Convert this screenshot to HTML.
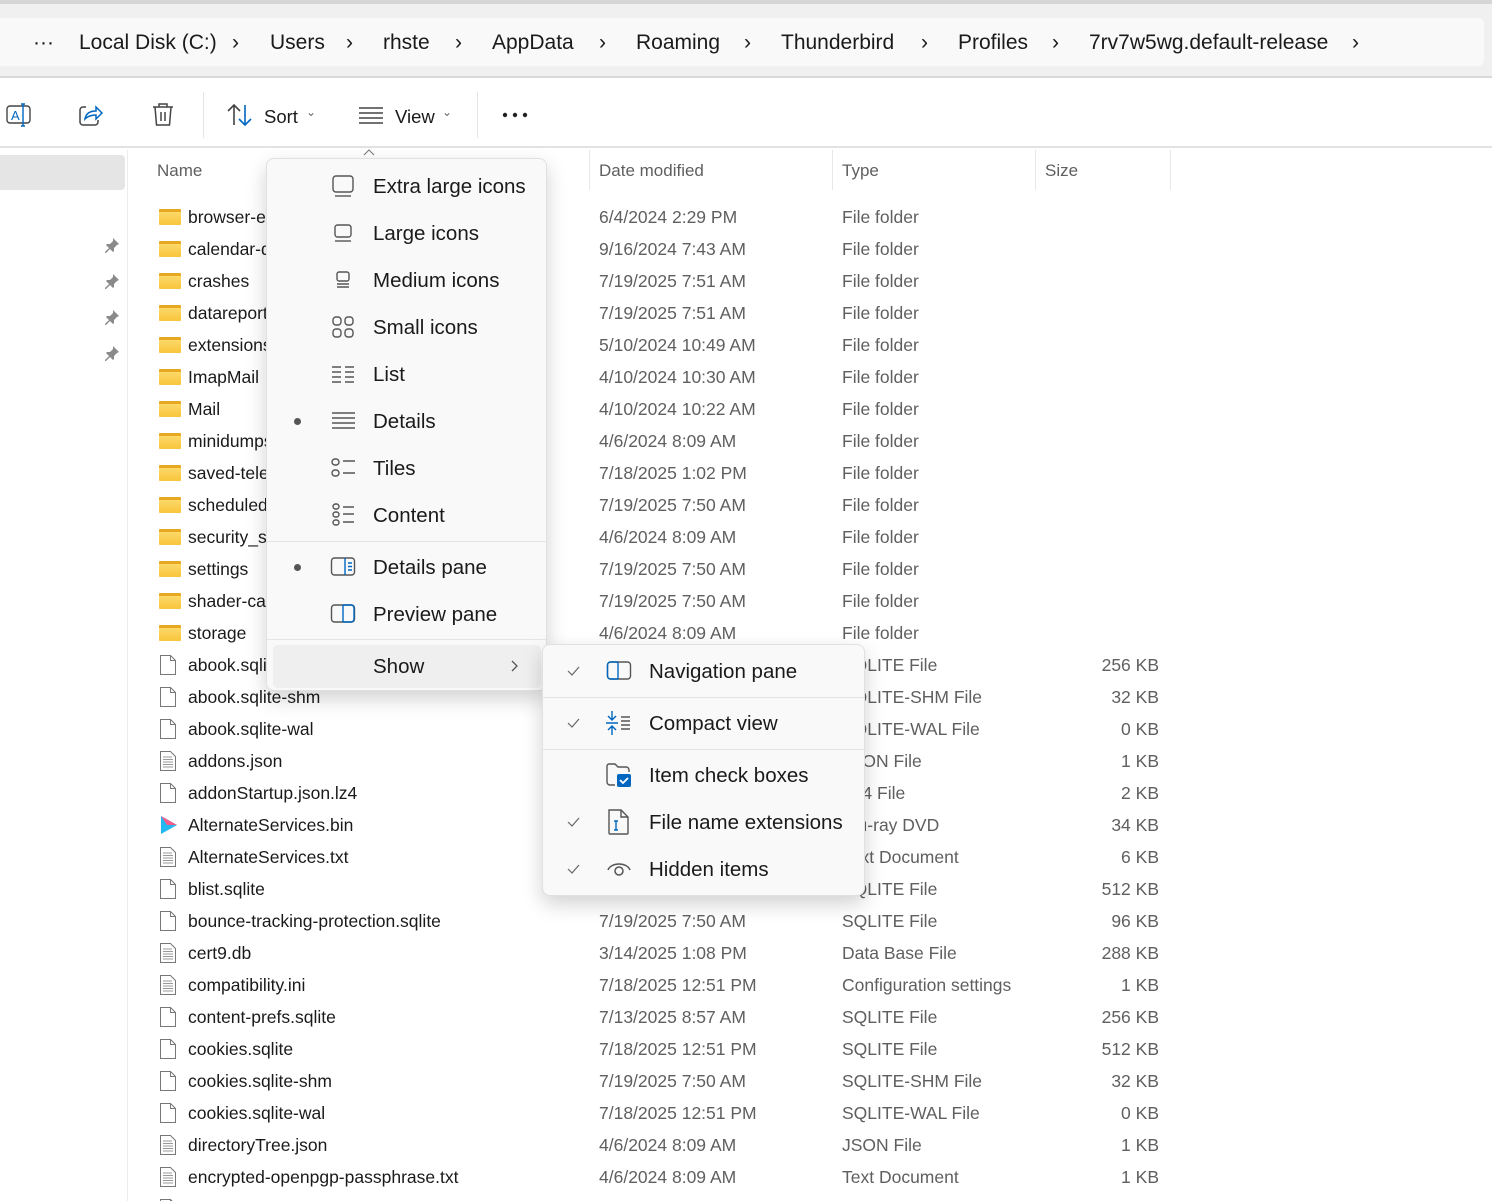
<!DOCTYPE html>
<html><head><meta charset="utf-8">
<style>
*{box-sizing:border-box;margin:0;padding:0}
html,body{width:1492px;height:1201px;overflow:hidden}
body{background:#fff;font-family:"Liberation Sans",sans-serif;position:relative;color:#1a1a1a}
.abs{position:absolute}
.top{left:0;top:0;width:1492px;height:78px;background:#f0f0f0;border-top:4px solid #d6d6d6;border-bottom:2px solid #d9d9d9}
.crumb{left:0;top:18px;width:1484px;height:48px;background:#f9f9f9;border-radius:0 6px 6px 0}
.bc{top:31px;font-size:21px;color:#1a1a1a;white-space:nowrap}
.tb{left:0;top:80px;width:1492px;height:68px;background:#fff;border-bottom:2px solid #e3e3e3}
.nav{left:0;top:150px;width:128px;height:1051px;border-right:1px solid #ececec}
.hdr{top:161px;font-size:17px;color:#5f5f5f}
.cd{top:150px;width:1px;height:40px;background:#e8e8e8}
.row{position:absolute;left:0;height:32px;width:1180px;font-size:17.5px;white-space:nowrap}
.row span{position:absolute;top:7px}
.n{left:188px}
.d{left:599px;color:#5f5f5f}
.t{left:842px;color:#5f5f5f}
.s{right:21px;color:#5f5f5f}
.ic{position:absolute;left:159px;top:6px}
.fold{width:22px;height:16px;top:9px;background:linear-gradient(#ffd96a,#f8c53a);border-radius:1px;border-top:3px solid #e8a922}
.menu{background:#f9f9f9;border:1px solid #e0e0e0;border-radius:8px;box-shadow:0 8px 20px rgba(0,0,0,.18)}
.mi{position:absolute;font-size:20.5px;color:#1a1a1a;white-space:nowrap}
.sep{position:absolute;height:1px;background:#e5e5e5}
.dot{position:absolute;width:7px;height:7px;border-radius:50%;background:#555}
.pin{left:104px}
</style></head><body>
<div class="abs top"></div>
<div class="abs crumb"></div>
<div class="abs bc" style="left:33px">···</div>
<div class="abs bc" style="left:79px">Local Disk (C:)</div>
<div class="abs bc" style="left:232px">›</div>
<div class="abs bc" style="left:270px">Users</div>
<div class="abs bc" style="left:346px">›</div>
<div class="abs bc" style="left:383px">rhste</div>
<div class="abs bc" style="left:455px">›</div>
<div class="abs bc" style="left:492px">AppData</div>
<div class="abs bc" style="left:599px">›</div>
<div class="abs bc" style="left:636px">Roaming</div>
<div class="abs bc" style="left:744px">›</div>
<div class="abs bc" style="left:781px">Thunderbird</div>
<div class="abs bc" style="left:921px">›</div>
<div class="abs bc" style="left:958px">Profiles</div>
<div class="abs bc" style="left:1052px">›</div>
<div class="abs bc" style="left:1089px">7rv7w5wg.default-release</div>
<div class="abs bc" style="left:1352px">›</div>

<div class="abs tb"></div>
<svg class="abs" style="left:6px;top:102px" width="26" height="26" viewBox="0 0 26 26" fill="none" stroke="#444" stroke-width="1.4"><rect x="1" y="4" width="23" height="17" rx="3"/><text x="5" y="18" font-size="13" fill="#0067c0" stroke="none" font-family="Liberation Sans">A</text><path d="M17 2v22M15 2h4M15 24h4" stroke="#0067c0"/></svg>
<svg class="abs" style="left:78px;top:102px" width="26" height="26" viewBox="0 0 26 26" fill="none" stroke-width="1.5"><path d="M8 5H5a3 3 0 0 0-3 3v12a3 3 0 0 0 3 3h12a3 3 0 0 0 3-3v-2" stroke="#444"/><path d="M7 17c1-6 5-8 11-8V5l6 6-6 6v-4c-4 0-8 1-11 4z" stroke="#0067c0"/></svg>
<svg class="abs" style="left:151px;top:102px" width="24" height="26" viewBox="0 0 24 26" fill="none" stroke="#444" stroke-width="1.5"><path d="M2 5h20M8 5V2h8v3M4 5l1.5 18h13L20 5M10 10v9M14 10v9"/></svg>
<div class="abs" style="left:203px;top:92px;width:1px;height:46px;background:#e5e5e5"></div>
<svg class="abs" style="left:227px;top:103px" width="26" height="24" viewBox="0 0 26 24" fill="none" stroke-width="1.6"><path d="M7 22V2M1 8l6-6 6 6" stroke="#444"/><path d="M18 2v20M12 16l6 6 6-6" stroke="#0067c0"/></svg>
<div class="abs" style="left:264px;top:106px;font-size:18.5px">Sort</div>
<div class="abs" style="left:306px;top:105px;font-size:12px;color:#666">⌄</div>
<svg class="abs" style="left:358px;top:106px" width="26" height="18" viewBox="0 0 26 18" stroke="#444" stroke-width="1.4"><path d="M1 2h24M1 7h24M1 12h24M1 17h24"/></svg>
<div class="abs" style="left:395px;top:106px;font-size:18.5px">View</div>
<div class="abs" style="left:442px;top:105px;font-size:12px;color:#666">⌄</div>
<div class="abs" style="left:477px;top:92px;width:1px;height:46px;background:#e5e5e5"></div>
<svg class="abs" style="left:502px;top:112px" width="26" height="6"><circle cx="3" cy="3" r="2.2" fill="#222"/><circle cx="13" cy="3" r="2.2" fill="#222"/><circle cx="23" cy="3" r="2.2" fill="#222"/></svg>

<div class="abs nav"></div>
<div class="abs" style="left:0;top:155px;width:125px;height:35px;background:#e5e5e5;border-radius:0 4px 4px 0"></div>
<svg width="0" height="0" style="position:absolute"><defs><symbol id="pin" viewBox="0 0 16 16"><path d="M9 1l6 6-2 1-3 3 0 3-1 1-3-3-4 4-1 0 0-1 4-4-3-3 1-1 3 0 3-3z" fill="#8a8a8a"/></symbol></defs></svg>
<svg class="abs pin" style="top:237px" width="16" height="16"><use href="#pin"/></svg>
<svg class="abs pin" style="top:273px" width="16" height="16"><use href="#pin"/></svg>
<svg class="abs pin" style="top:309px" width="16" height="16"><use href="#pin"/></svg>
<svg class="abs pin" style="top:345px" width="16" height="16"><use href="#pin"/></svg>

<div class="abs hdr" style="left:157px">Name</div>
<div class="abs hdr" style="left:599px">Date modified</div>
<div class="abs hdr" style="left:842px">Type</div>
<div class="abs hdr" style="left:1045px">Size</div>
<div class="abs cd" style="left:589px"></div>
<div class="abs cd" style="left:832px"></div>
<div class="abs cd" style="left:1035px"></div>
<div class="abs cd" style="left:1170px"></div>
<svg class="abs" style="left:363px;top:149px" width="12" height="7"><path d="M1 6l5-5 5 5" fill="none" stroke="#777"/></svg>

<div class="row" style="top:200px"><i class="ic fold"></i><span class="n">browser-extension-data</span><span class="d">6/4/2024 2:29 PM</span><span class="t">File folder</span></div>
<div class="row" style="top:232px"><i class="ic fold"></i><span class="n">calendar-data</span><span class="d">9/16/2024 7:43 AM</span><span class="t">File folder</span></div>
<div class="row" style="top:264px"><i class="ic fold"></i><span class="n">crashes</span><span class="d">7/19/2025 7:51 AM</span><span class="t">File folder</span></div>
<div class="row" style="top:296px"><i class="ic fold"></i><span class="n">datareporting</span><span class="d">7/19/2025 7:51 AM</span><span class="t">File folder</span></div>
<div class="row" style="top:328px"><i class="ic fold"></i><span class="n">extensions</span><span class="d">5/10/2024 10:49 AM</span><span class="t">File folder</span></div>
<div class="row" style="top:360px"><i class="ic fold"></i><span class="n">ImapMail</span><span class="d">4/10/2024 10:30 AM</span><span class="t">File folder</span></div>
<div class="row" style="top:392px"><i class="ic fold"></i><span class="n">Mail</span><span class="d">4/10/2024 10:22 AM</span><span class="t">File folder</span></div>
<div class="row" style="top:424px"><i class="ic fold"></i><span class="n">minidumps</span><span class="d">4/6/2024 8:09 AM</span><span class="t">File folder</span></div>
<div class="row" style="top:456px"><i class="ic fold"></i><span class="n">saved-telemetry-pings</span><span class="d">7/18/2025 1:02 PM</span><span class="t">File folder</span></div>
<div class="row" style="top:488px"><i class="ic fold"></i><span class="n">scheduled</span><span class="d">7/19/2025 7:50 AM</span><span class="t">File folder</span></div>
<div class="row" style="top:520px"><i class="ic fold"></i><span class="n">security_state</span><span class="d">4/6/2024 8:09 AM</span><span class="t">File folder</span></div>
<div class="row" style="top:552px"><i class="ic fold"></i><span class="n">settings</span><span class="d">7/19/2025 7:50 AM</span><span class="t">File folder</span></div>
<div class="row" style="top:584px"><i class="ic fold"></i><span class="n">shader-cache</span><span class="d">7/19/2025 7:50 AM</span><span class="t">File folder</span></div>
<div class="row" style="top:616px"><i class="ic fold"></i><span class="n">storage</span><span class="d">4/6/2024 8:09 AM</span><span class="t">File folder</span></div>

<svg width="0" height="0" style="position:absolute"><defs><symbol id="pg" viewBox="0 0 18 22"><path d="M1.5 1.5h10l5 5v14h-15z" fill="#fff" stroke="#777"/><path d="M11.5 1.5v5h5" fill="none" stroke="#777"/></symbol><symbol id="tx" viewBox="0 0 18 22"><path d="M1.5 1.5h10l5 5v14h-15z" fill="#fff" stroke="#777"/><path d="M4 7h9M4 9.5h10M4 12h10M4 14.5h10M4 17h10" stroke="#999"/></symbol></defs></svg>

<div class="row" style="top:648px"><svg class="ic" width="18" height="22"><use href="#pg"/></svg><span class="n">abook.sqlite</span><span class="d">7/19/2025 7:50 AM</span><span class="t">SQLITE File</span><span class="s">256 KB</span></div>
<div class="row" style="top:680px"><svg class="ic" width="18" height="22"><use href="#pg"/></svg><span class="n">abook.sqlite-shm</span><span class="d">7/19/2025 7:50 AM</span><span class="t">SQLITE-SHM File</span><span class="s">32 KB</span></div>
<div class="row" style="top:712px"><svg class="ic" width="18" height="22"><use href="#pg"/></svg><span class="n">abook.sqlite-wal</span><span class="d">7/19/2025 7:50 AM</span><span class="t">SQLITE-WAL File</span><span class="s">0 KB</span></div>
<div class="row" style="top:744px"><svg class="ic" width="18" height="22"><use href="#tx"/></svg><span class="n">addons.json</span><span class="d">7/19/2025 7:50 AM</span><span class="t">JSON File</span><span class="s">1 KB</span></div>
<div class="row" style="top:776px"><svg class="ic" width="18" height="22"><use href="#pg"/></svg><span class="n">addonStartup.json.lz4</span><span class="d">7/19/2025 7:50 AM</span><span class="t">LZ4 File</span><span class="s">2 KB</span></div>
<div class="row" style="top:808px"><svg class="ic" width="20" height="22" viewBox="0 0 20 22"><path d="M2 2l16 9-16 9z" fill="#22b8f0"/><path d="M2 2l16 9H8z" fill="#f45c8c"/></svg><span class="n">AlternateServices.bin</span><span class="d">7/19/2025 7:50 AM</span><span class="t">Blu-ray DVD</span><span class="s">34 KB</span></div>
<div class="row" style="top:840px"><svg class="ic" width="18" height="22"><use href="#tx"/></svg><span class="n">AlternateServices.txt</span><span class="d">7/19/2025 7:50 AM</span><span class="t">Text Document</span><span class="s">6 KB</span></div>
<div class="row" style="top:872px"><svg class="ic" width="18" height="22"><use href="#pg"/></svg><span class="n">blist.sqlite</span><span class="d">7/19/2025 7:50 AM</span><span class="t">SQLITE File</span><span class="s">512 KB</span></div>
<div class="row" style="top:904px"><svg class="ic" width="18" height="22"><use href="#pg"/></svg><span class="n">bounce-tracking-protection.sqlite</span><span class="d">7/19/2025 7:50 AM</span><span class="t">SQLITE File</span><span class="s">96 KB</span></div>
<div class="row" style="top:936px"><svg class="ic" width="18" height="22"><use href="#tx"/></svg><span class="n">cert9.db</span><span class="d">3/14/2025 1:08 PM</span><span class="t">Data Base File</span><span class="s">288 KB</span></div>
<div class="row" style="top:968px"><svg class="ic" width="18" height="22"><use href="#tx"/></svg><span class="n">compatibility.ini</span><span class="d">7/18/2025 12:51 PM</span><span class="t">Configuration settings</span><span class="s">1 KB</span></div>
<div class="row" style="top:1000px"><svg class="ic" width="18" height="22"><use href="#pg"/></svg><span class="n">content-prefs.sqlite</span><span class="d">7/13/2025 8:57 AM</span><span class="t">SQLITE File</span><span class="s">256 KB</span></div>
<div class="row" style="top:1032px"><svg class="ic" width="18" height="22"><use href="#pg"/></svg><span class="n">cookies.sqlite</span><span class="d">7/18/2025 12:51 PM</span><span class="t">SQLITE File</span><span class="s">512 KB</span></div>
<div class="row" style="top:1064px"><svg class="ic" width="18" height="22"><use href="#pg"/></svg><span class="n">cookies.sqlite-shm</span><span class="d">7/19/2025 7:50 AM</span><span class="t">SQLITE-SHM File</span><span class="s">32 KB</span></div>
<div class="row" style="top:1096px"><svg class="ic" width="18" height="22"><use href="#pg"/></svg><span class="n">cookies.sqlite-wal</span><span class="d">7/18/2025 12:51 PM</span><span class="t">SQLITE-WAL File</span><span class="s">0 KB</span></div>
<div class="row" style="top:1128px"><svg class="ic" width="18" height="22"><use href="#tx"/></svg><span class="n">directoryTree.json</span><span class="d">4/6/2024 8:09 AM</span><span class="t">JSON File</span><span class="s">1 KB</span></div>
<div class="row" style="top:1160px"><svg class="ic" width="18" height="22"><use href="#tx"/></svg><span class="n">encrypted-openpgp-passphrase.txt</span><span class="d">4/6/2024 8:09 AM</span><span class="t">Text Document</span><span class="s">1 KB</span></div>
<div class="row" style="top:1192px;height:9px;overflow:hidden"><svg class="ic" width="18" height="22"><use href="#pg"/></svg></div>

<!-- View menu -->
<div class="abs menu" style="left:266px;top:158px;width:281px;height:533px"></div>
<svg class="abs" style="left:331px;top:174px" width="24" height="24" viewBox="0 0 24 24" fill="none" stroke="#555" stroke-width="1.4"><rect x="2" y="2" width="20" height="16" rx="3"/><path d="M4 22h16"/></svg>
<div class="mi" style="left:373px;top:175px">Extra large icons</div>
<svg class="abs" style="left:331px;top:221px" width="24" height="24" viewBox="0 0 24 24" fill="none" stroke="#555" stroke-width="1.4"><rect x="4" y="4" width="16" height="12" rx="2.5"/><path d="M4 20h16"/></svg>
<div class="mi" style="left:373px;top:222px">Large icons</div>
<svg class="abs" style="left:331px;top:268px" width="24" height="24" viewBox="0 0 24 24" fill="none" stroke="#555" stroke-width="1.4"><rect x="6" y="4" width="12" height="9" rx="2"/><path d="M6 16h12M6 19h12"/></svg>
<div class="mi" style="left:373px;top:269px">Medium icons</div>
<svg class="abs" style="left:331px;top:315px" width="24" height="24" viewBox="0 0 24 24" fill="none" stroke="#555" stroke-width="1.4"><rect x="2" y="2" width="8" height="8" rx="3"/><rect x="14" y="2" width="8" height="8" rx="3"/><rect x="2" y="14" width="8" height="8" rx="3"/><rect x="14" y="14" width="8" height="8" rx="3"/></svg>
<div class="mi" style="left:373px;top:316px">Small icons</div>
<svg class="abs" style="left:331px;top:362px" width="24" height="24" viewBox="0 0 24 24" fill="none" stroke="#555" stroke-width="1.4"><path d="M1 5h9M1 10h9M1 15h9M1 20h9M14 5h9M14 10h9M14 15h9M14 20h9"/></svg>
<div class="mi" style="left:373px;top:363px">List</div>
<div class="dot" style="left:294px;top:418px"></div>
<svg class="abs" style="left:331px;top:409px" width="24" height="24" viewBox="0 0 24 24" fill="none" stroke="#555" stroke-width="1.4"><path d="M1 4h23M1 9h23M1 14h23M1 19h23"/></svg>
<div class="mi" style="left:373px;top:410px">Details</div>
<svg class="abs" style="left:331px;top:456px" width="24" height="24" viewBox="0 0 24 24" fill="none" stroke="#555" stroke-width="1.4"><rect x="1" y="3" width="7" height="6" rx="3"/><rect x="1" y="14" width="7" height="6" rx="3"/><path d="M12 5h12M12 17h12"/></svg>
<div class="mi" style="left:373px;top:457px">Tiles</div>
<svg class="abs" style="left:331px;top:503px" width="24" height="24" viewBox="0 0 24 24" fill="none" stroke="#555" stroke-width="1.4"><rect x="2" y="1" width="6" height="5" rx="2.5"/><rect x="2" y="9" width="6" height="5" rx="2.5"/><rect x="2" y="17" width="6" height="5" rx="2.5"/><path d="M12 4h11M12 11h11M12 19h11"/></svg>
<div class="mi" style="left:373px;top:504px">Content</div>
<div class="sep" style="left:267px;top:541px;width:279px"></div>
<div class="dot" style="left:294px;top:564px"></div>
<svg class="abs" style="left:330px;top:555px" width="26" height="24" viewBox="0 0 26 24" fill="none" stroke-width="1.4"><rect x="1.5" y="3" width="23" height="17" rx="3" stroke="#555"/><path d="M15 3v17M18 8h4M18 11.5h4M18 15h4" stroke="#0067c0"/></svg>
<div class="mi" style="left:373px;top:556px">Details pane</div>
<svg class="abs" style="left:330px;top:602px" width="26" height="24" viewBox="0 0 26 24" fill="none" stroke-width="1.4"><rect x="1.5" y="3" width="23" height="17" rx="3" stroke="#555"/><path d="M13 3v17M13 3h8a3 3 0 0 1 3 3v11a3 3 0 0 1-3 3h-8" stroke="#0067c0"/></svg>
<div class="mi" style="left:373px;top:603px">Preview pane</div>
<div class="sep" style="left:267px;top:639px;width:279px"></div>
<div class="abs" style="left:273px;top:645px;width:268px;height:43px;background:#efefef;border-radius:5px"></div>
<div class="mi" style="left:373px;top:655px">Show</div>
<svg class="abs" style="left:511px;top:660px" width="8" height="12"><path d="M1 1l5 5-5 5" fill="none" stroke="#555" stroke-width="1.3"/></svg>

<!-- Show submenu -->
<div class="abs menu" style="left:542px;top:644px;width:323px;height:252px"></div>
<svg class="abs" style="left:567px;top:666px" width="13" height="10"><path d="M1 5l4 4 7-8" fill="none" stroke="#666" stroke-width="1.2"/></svg>
<svg class="abs" style="left:606px;top:659px" width="26" height="24" viewBox="0 0 26 24" fill="none" stroke-width="1.4"><rect x="1.5" y="3" width="23" height="17" rx="3" stroke="#555"/><path d="M12 3v17M12 3H4.5a3 3 0 0 0-3 3v11a3 3 0 0 0 3 3H12" stroke="#0067c0"/></svg>
<div class="mi" style="left:649px;top:660px">Navigation pane</div>
<div class="sep" style="left:543px;top:697px;width:321px"></div>
<svg class="abs" style="left:567px;top:718px" width="13" height="10"><path d="M1 5l4 4 7-8" fill="none" stroke="#666" stroke-width="1.2"/></svg>
<svg class="abs" style="left:606px;top:710px" width="26" height="26" viewBox="0 0 26 26" fill="none" stroke-width="1.4"><path d="M6 1v9M2 6l4 4 4-4M6 25v-9M2 20l4-4 4 4M0 13h12" stroke="#0067c0"/><path d="M15 7h9M15 11h9M15 15h9M15 19h9" stroke="#555"/></svg>
<div class="mi" style="left:649px;top:712px">Compact view</div>
<div class="sep" style="left:543px;top:749px;width:321px"></div>
<svg class="abs" style="left:606px;top:762px" width="26" height="26" viewBox="0 0 26 26" fill="none" stroke-width="1.4"><path d="M9 23H4a3 3 0 0 1-3-3V4a2 2 0 0 1 2-2h6l3 3h8a3 3 0 0 1 3 3v2" stroke="#555"/><rect x="11" y="12" width="14" height="13" rx="2" fill="#0067c0"/><path d="M14 18l3 3 5-5" stroke="#fff" stroke-width="1.8"/></svg>
<div class="mi" style="left:649px;top:764px">Item check boxes</div>
<svg class="abs" style="left:567px;top:817px" width="13" height="10"><path d="M1 5l4 4 7-8" fill="none" stroke="#666" stroke-width="1.2"/></svg>
<svg class="abs" style="left:607px;top:808px" width="24" height="28" viewBox="0 0 24 28" fill="none" stroke-width="1.4"><path d="M2 2h12l7 7v16a1 1 0 0 1-1 1H3a1 1 0 0 1-1-1z" stroke="#555"/><path d="M14 2v7h7" stroke="#555"/><path d="M9 13v9M7 13h4M7 22h4" stroke="#0067c0"/></svg>
<div class="mi" style="left:649px;top:811px">File name extensions</div>
<svg class="abs" style="left:567px;top:864px" width="13" height="10"><path d="M1 5l4 4 7-8" fill="none" stroke="#666" stroke-width="1.2"/></svg>
<svg class="abs" style="left:606px;top:858px" width="26" height="22" viewBox="0 0 26 22" fill="none" stroke="#555" stroke-width="1.5"><path d="M2 12C5 4 21 4 24 12"/><circle cx="13" cy="13" r="4"/></svg>
<div class="mi" style="left:649px;top:858px">Hidden items</div>
</body></html>
